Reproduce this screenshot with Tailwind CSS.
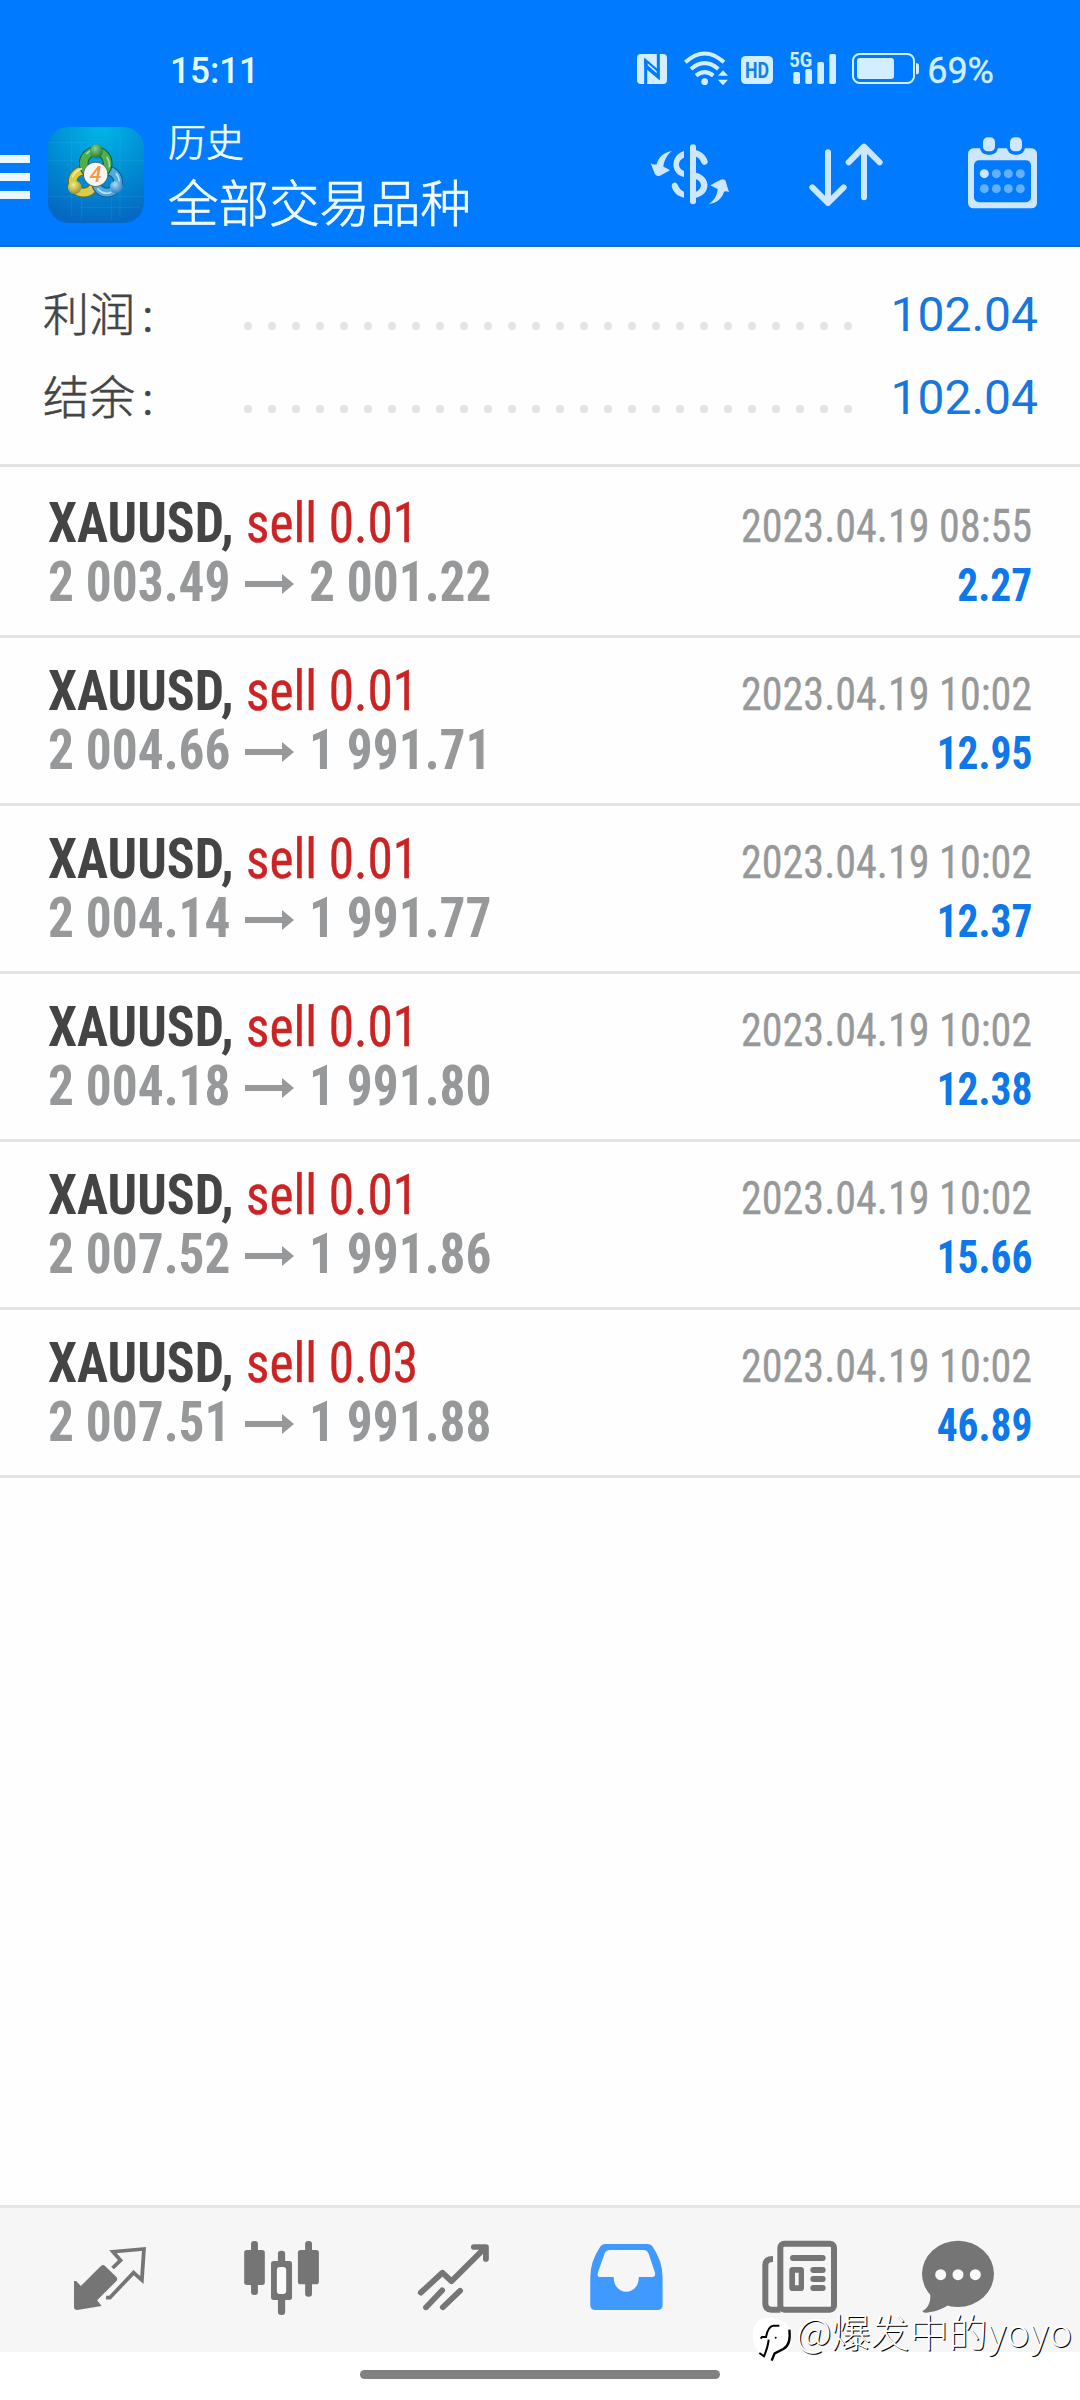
<!DOCTYPE html>
<html lang="zh-CN">
<head>
<meta charset="utf-8">
<title>历史</title>
<script src="https://cdn.jsdelivr.net/npm/@tailwindcss/browser@4"></script>
</head>
<body class="bg-white">
<div class="relative flex h-[2400px] w-[1080px] flex-col overflow-hidden bg-[#fefefe] font-[Roboto,'Noto_Sans_CJK_SC',sans-serif]">

  <header class="flex h-[247px] shrink-0 flex-col border-b-2 border-[#1a68bd] bg-[#007aff]">
    <!-- status bar -->
    <div class="mt-[51px] flex h-[34px] items-center justify-between pr-[86px] pl-[170px] text-[36px] leading-[34px] text-[#e4fbff]">
      <span class="mt-[5px] origin-left scale-x-[.975] font-medium">15:11</span>
      <div class="flex items-center text-[#d3efff]">
        <svg class="h-[34px] w-[30px]" viewBox="111 63 90 102" fill="currentColor"><rect x="111" y="72" width="90" height="90" rx="12"/><path d="M137 162V92L174 124M175 72V142L140 112" fill="none" stroke="#007aff" stroke-width="9"/><path d="M133 88l45 40v18l-45-40z" fill="#007aff"/><path d="M143 106l27 24v-6l-27-24z"/></svg>
        <svg class="ml-[17px] h-[34px] w-[44px]" viewBox="252 63 132 102" fill="none" stroke="currentColor" stroke-width="12"><path d="M256 97Q314 44 372 97M273 117Q314 82 355 117M288 137Q314 116 340 137"/><circle cx="314" cy="155" r="10" fill="currentColor" stroke="none"/><path d="M369 121l15 16h-30zM369 166l15-17h-30z" fill="currentColor" stroke="none"/></svg>
        <svg class="ml-[13px] h-[34px] w-[32px]" viewBox="423 63 96 102"><rect x="423" y="78" width="96" height="84" rx="14" fill="currentColor"/><text x="471" y="143" text-anchor="middle" textLength="72" lengthAdjust="spacingAndGlyphs" font-family="Roboto" font-weight="700" font-size="64" fill="#1480ea">HD</text></svg>
        <svg class="ml-[17px] h-[34px] w-[46px] overflow-visible" viewBox="570 63 138 102" fill="currentColor"><text x="568" y="111" textLength="69" lengthAdjust="spacingAndGlyphs" font-family="Roboto" font-weight="700" font-size="60">5G</text><rect x="580" y="126" width="20" height="36" rx="5"/><rect x="616" y="117" width="20" height="45" rx="5"/><rect x="652" y="96" width="20" height="66" rx="5"/><rect x="688" y="72" width="20" height="90" rx="5"/></svg>
        <svg class="ml-[16px] h-[34px] w-[67px]" viewBox="756 63 201 102"><rect x="759" y="72" width="183" height="87" rx="20" fill="none" stroke="currentColor" stroke-width="6"/><rect x="771" y="84" width="111" height="63" rx="9" fill="currentColor"/><path d="M948 99q9 0 9 8v18q0 8-9 8z" fill="currentColor"/></svg>
        <span class="mt-[5px] ml-[8px] [-webkit-text-stroke:0.4px]">69%</span>
      </div>
    </div>

    <!-- toolbar -->
    <div class="mt-[22px] flex h-[136px] items-center">
      <div class="mt-[4px] flex w-[30px] flex-col gap-[10px]">
        <span class="h-[8px] bg-[#eaf7ff]"></span><span class="h-[8px] bg-[#eaf7ff]"></span><span class="h-[8px] bg-[#eaf7ff]"></span>
      </div>
      <svg class="ml-[18px] size-[96px]" viewBox="24 21 288 288">
        <defs>
          <radialGradient id="bg" cx=".55" cy="0" r="1"><stop offset="0" stop-color="#00b6e8"/><stop offset=".5" stop-color="#0090d4"/><stop offset="1" stop-color="#0568c2"/></radialGradient>
          <radialGradient id="gr" cx=".4" cy=".3" r=".7"><stop offset="0" stop-color="#8fd08a"/><stop offset="1" stop-color="#1f7a35"/></radialGradient>
          <radialGradient id="ye" cx=".4" cy=".3" r=".7"><stop offset="0" stop-color="#f3ee8a"/><stop offset="1" stop-color="#9d9420"/></radialGradient>
          <radialGradient id="bl" cx=".4" cy=".3" r=".7"><stop offset="0" stop-color="#a8dcf7"/><stop offset="1" stop-color="#2a7fc4"/></radialGradient>
        </defs>
        <rect x="24" y="21" width="288" height="288" rx="62" fill="url(#bg)"/>
        <path d="M24 122H312M24 230H312M95 40V290M125 60V300M240 40V290M215 180V300M24 68H200M120 262H300" stroke="#5cc8f0" stroke-opacity=".22" stroke-width="2"/>
        <g fill="none">
          <circle cx="131" cy="185" r="33" stroke="#6f6a1c" stroke-width="29"/><circle cx="131" cy="185" r="33" stroke="#d8cc48" stroke-width="23"/>
          <circle cx="201" cy="185" r="33" stroke="#11578f" stroke-width="29"/><circle cx="201" cy="185" r="33" stroke="#4fa9e0" stroke-width="23"/>
          <circle cx="167" cy="130" r="36" stroke="#145c2c" stroke-width="29"/><circle cx="167" cy="130" r="36" stroke="#4fae50" stroke-width="23"/>
          <path d="M97 172Q106 150 126 146" stroke="#f4ee9c" stroke-width="5"/><path d="M138 102Q148 92 158 92M200 110Q210 125 208 142" stroke="#a5dc98" stroke-width="5"/><path d="M228 160Q242 178 236 200M172 205Q190 226 214 217" stroke="#b5e2f8" stroke-width="5"/>
        </g>
        <ellipse cx="169" cy="94" rx="19" ry="21" fill="url(#gr)"/><circle cx="104" cy="202" r="20" fill="url(#ye)"/><circle cx="229" cy="201" r="19" fill="url(#bl)"/>
        <circle cx="167" cy="163" r="37" fill="#5b6a50"/><circle cx="167" cy="163" r="35" fill="#f7f6f4"/>
        <text x="167" y="185" text-anchor="middle" font-family="Roboto" font-style="italic" font-weight="500" font-size="64" fill="#f29a45">4</text>
      </svg>
      <div class="-mt-[11px] ml-[24px] flex flex-col font-light text-[#f0fcff] [-webkit-text-stroke:0.7px] font-['Noto_Sans_CJK_SC',sans-serif]">
        <span class="text-[38px] leading-[61px]">历史</span>
        <span class="text-[50.5px] leading-[61px]">全部交易品种</span>
      </div>
      <svg class="-mt-[4px] ml-auto h-[65px] w-[80px]" viewBox="150 330 240 195" fill="#cce7ff"><rect x="270" y="340" width="18" height="180" rx="9"/><path d="M252 360C210 372 210 430 252 438V420C232 412 232 388 252 380ZM215 465a9 9 0 0 1 17-5C238 472 242 478 252 482V500C232 496 218 482 215 465ZM288 358C305 362 318 374 322 388a9 9 0 0 1-17 8C300 385 297 380 288 377ZM288 425C334 436 334 490 288 500V482C308 474 308 452 288 445ZM216 360C190 365 176 378 170 400Q160 402 152 397L165 430Q170 437 180 434L210 418Q200 410 190 407C192 390 200 372 216 360ZM326 519C345 508 352 490 353 474Q343 470 331 463L362 446Q374 442 377 450L387 484Q379 478 372 482C368 500 350 517 326 519Z"/></svg>
      <svg class="-mt-[2px] ml-[78px] h-[65px] w-[76px]" viewBox="624 335 228 195" fill="none" stroke="#cce7ff" stroke-width="18" stroke-linecap="round" stroke-linejoin="round"><path d="M684 366V518M637 471L684 518L731 471M792 501V350M746 396L792 349L839 396"/></svg>
      <svg class="-mt-[4px] mr-[43px] ml-[84px] h-[72px] w-[69px]" viewBox="1104 323 207 216"><rect x="1104" y="357" width="207" height="180" rx="16" fill="#cce7ff"/><g fill="#007aff"><rect x="1122" y="393" width="171" height="126" rx="15"/><rect x="1140" y="315" width="54" height="61" rx="22"/><rect x="1221" y="315" width="54" height="61" rx="22"/></g><g fill="#cce7ff"><rect x="1149" y="324" width="36" height="42" rx="14"/><rect x="1230" y="324" width="36" height="42" rx="14"/><circle cx="1153" cy="433" r="13.500"/></g><g fill="#62b0ff"><circle cx="1189" cy="433" r="13.500"/><circle cx="1225" cy="433" r="13.500"/><circle cx="1261" cy="433" r="13.500"/><circle cx="1153" cy="478" r="13.500"/><circle cx="1189" cy="478" r="13.500"/><circle cx="1225" cy="478" r="13.500"/><circle cx="1261" cy="478" r="13.500"/></g></svg>
    </div>
  </header>

  <!-- totals -->
  <section id="totals" class="mb-[3px] h-[220px] shrink-0 border-b-3 border-[#e4e4e4] pt-[26px] pr-[42px] pl-[43px]"></section>

  <!-- closed deals -->
  <main id="deals" class="grow"></main>

  <nav class="flex h-[147px] shrink-0 border-t-3 border-[#e5e5e5] bg-[#f6f6f6] pt-[28px] pl-[67px] text-[#757575]">
    <svg class="mr-[86px] h-[84px] w-[86px]" viewBox="194.600 138 249.700 252" preserveAspectRatio="none" fill="currentColor"><path d="M215 273H221L235 288L293 228Q299 222 305 228L338 261Q343 267 338 273L282 331L295 348L224 360Q215 360 215 351Z"/><path d="M327 234L350 211L328 185L418 177L412 270L388 248L319 323H308" fill="none" stroke="currentColor" stroke-width="11"/></svg>
    <svg class="mr-[86px] h-[84px] w-[86px]" viewBox="694 138 249.700 252" preserveAspectRatio="none" fill="currentColor"><rect x="709" y="180" width="60" height="105" rx="8"/><rect x="729" y="153" width="20" height="162" rx="9"/><rect x="865" y="180" width="61" height="103" rx="8"/><rect x="886" y="153" width="20" height="167" rx="9"/><rect x="807" y="182" width="21" height="193" rx="9"/><rect x="787" y="213" width="61" height="117" rx="8"/><rect x="804" y="231" width="27" height="81" rx="9" fill="#fcfcfc"/></svg>
    <svg class="mr-[86px] h-[84px] w-[86px]" viewBox="1193.500 138 249.700 252" preserveAspectRatio="none" fill="none" stroke="currentColor" stroke-width="17" stroke-linecap="round" stroke-linejoin="round"><path d="M1222 308L1285 248L1311 274L1405 177M1376 171H1411V207M1237 352L1284 301M1286 352L1336 302" /></svg>
    <svg class="mr-[86px] h-[84px] w-[86px]" viewBox="124.900 138 249.700 252" preserveAspectRatio="none"><path fill="#4099ff" fill-rule="evenodd" d="M190 162H312Q322 162 328 172Q356 215 356 262V345Q356 360 341 360H161Q146 360 146 345V262Q146 215 174 172Q180 162 190 162ZM203 180H300Q310 180 315 190L334 248Q336 261 326 261H287C287 320 214 320 214 261H175Q165 261 168 248L188 190Q193 180 203 180Z"/></svg>
    <svg class="mr-[74px] h-[84px] w-[86px]" viewBox="45 18 258 252" fill="none" stroke="currentColor" stroke-width="18"><rect x="121" y="41" width="161" height="198" rx="12"/><path d="M99 87Q76 87 76 106V220Q76 239 94 239H121"/><path stroke-linecap="round" d="M159 84H248M220 120H248M220 147H248M220 174H248"/><path fill="currentColor" fill-rule="evenodd" stroke="none" d="M158 111H182Q192 111 192 121V173Q192 183 182 183H158Q148 183 148 173V121Q148 111 158 111ZM165 128V166H176V128Z"/></svg>
    <svg class="h-[84px] w-[86px]" viewBox="525 18 258 252" fill="currentColor"><ellipse cx="654" cy="131.500" rx="108" ry="99.500"/><path d="M571 185V197C572 220 560 238 547 243Q548 249 560 248C590 245 608 236 624 226Z"/><g fill="#fafafa"><circle cx="602" cy="134" r="16.500"/><circle cx="654" cy="134" r="16.500"/><circle cx="706" cy="134" r="16.500"/></g></svg>
  </nav>
  <div class="flex h-[48px] shrink-0 justify-center bg-white pt-[18px]"><span class="h-[9px] w-[360px] rounded-full bg-[#808080]"></span></div>

  <!-- author mark laid over the tab bar -->
  <div class="absolute top-[2309px] left-[750px] flex items-start">
    <svg class="mt-[4px] h-[50px] w-[45px]" viewBox="30 250 135 150" fill="none" stroke="#000" stroke-width="6"><path d="M38 315Q40 264 88 264Q150 268 154 318Q154 362 122 380Q100 385 80 380Q40 372 38 315Z" fill="#fff" stroke="none"/><path d="M62 327L66 322H78Q84 290 100 288H118M86 330Q84 352 72 380L58 370"/><path d="M148 300Q154 345 130 358L104 371L95 393" stroke-width="7"/><circle cx="107" cy="324" r="3" fill="#000" stroke="none"/></svg>
    <span class="-mt-[2px] ml-[1px] text-[39px] leading-[46px] font-light whitespace-nowrap text-white [text-shadow:1px_1px_0_#000] font-['Noto_Sans_CJK_SC',sans-serif]">@爆发中的yoyo</span>
  </div>
</div>

<script>
const totals = [['利润', '102.04'], ['结余', '102.04']];
document.getElementById('totals').innerHTML = totals.map(([label, value]) => `
  <div class="flex h-[83px] items-center">
    <span class="-mt-[6px] w-[201px] text-[46px] font-light text-[#444] [-webkit-text-stroke:0.6px] font-['Noto_Sans_CJK_SC',sans-serif]">${label}<span class="ml-[7px]">:</span></span>
    <span class="mt-[23px] flex gap-[16px]">${'<i class="size-[8px] rounded-full bg-[#e4e4e4]"></i>'.repeat(26)}</span>
    <span class="ml-auto text-[48px] text-[#1677e0]">${value}</span>
  </div>`).join('');

const deals = [
  ['0.01', '2 003.49', '2 001.22', '08:55', '2.27'],
  ['0.01', '2 004.66', '1 991.71', '10:02', '12.95'],
  ['0.01', '2 004.14', '1 991.77', '10:02', '12.37'],
  ['0.01', '2 004.18', '1 991.80', '10:02', '12.38'],
  ['0.01', '2 007.52', '1 991.86', '10:02', '15.66'],
  ['0.03', '2 007.51', '1 991.88', '10:02', '46.89'],
];
document.getElementById('deals').innerHTML = deals.map(([lots, open, close, time, profit]) => `
  <article class="h-[168px] border-b-3 border-[#e4e4e4] px-[48px] pt-[24px] text-[55px] leading-[59px] whitespace-nowrap font-['Roboto_Condensed',Roboto,sans-serif]">
    <div class="flex h-[59px] items-baseline justify-between">
      <div class="flex">
        <b class="w-[198px] origin-left scale-x-[.943] text-[#444]">XAUUSD,</b>
        <span class="origin-left scale-x-[.932] text-[#cc2222] [-webkit-text-stroke:0.4px]">sell ${lots}</span>
      </div>
      <span class="origin-right scale-x-[.915] text-[46px] text-[#969899] [-webkit-text-stroke:0.3px]">2023.04.19 ${time}</span>
    </div>
    <div class="flex h-[59px] items-baseline justify-between">
      <div class="flex items-center font-bold text-[#969899]">
        <span class="w-[197px] origin-left scale-x-[.934]">${open}</span>
        <svg class="mt-[2px] mr-[15px] h-[20px] w-[49px]" viewBox="0 0 49 20" fill="currentColor"><path d="M0 7H37V0L49 10L37 20V13H0Z"/></svg>
        <span class="origin-left scale-x-[.934]">${close}</span>
      </div>
      <b class="origin-right scale-x-[.9] text-[46px] text-[#0d78ea]">${profit}</b>
    </div>
  </article>`).join('');
</script>
</body>
</html>
